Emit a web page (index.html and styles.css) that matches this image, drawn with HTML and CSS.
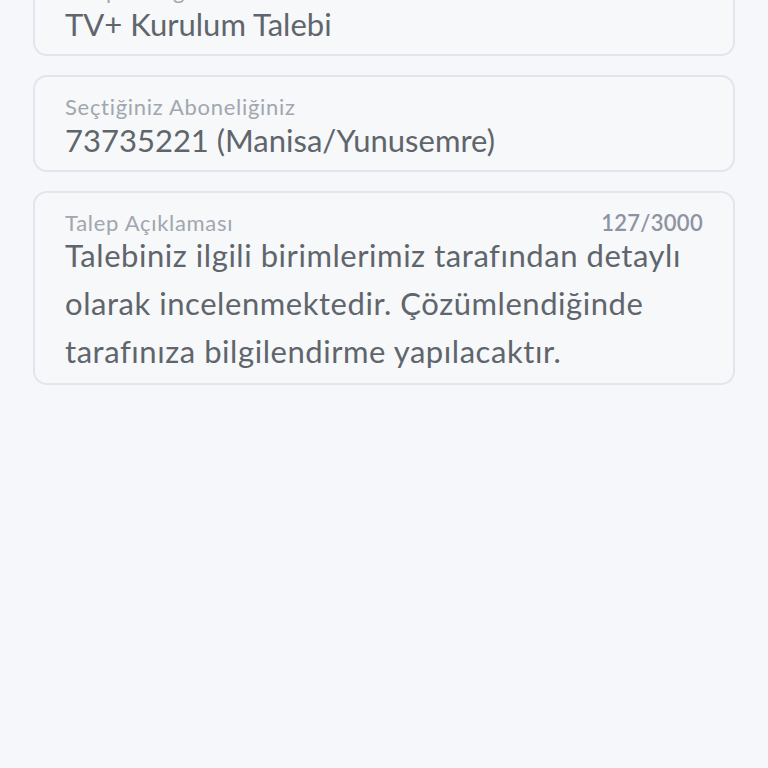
FILE: index.html
```html
<!DOCTYPE html>
<html lang="tr">
<head>
<meta charset="utf-8">
<link rel="stylesheet" href="styles.css">
</head>
<body>
<main class="form">
  <div class="field">
    <div class="label">Talep Kategorisi</div>
    <div class="value">TV+ Kurulum Talebi</div>
  </div>
  <div class="field">
    <div class="label">Seçtiğiniz Aboneliğiniz</div>
    <div class="value">73735221 (Manisa/Yunusemre)</div>
  </div>
  <div class="field area">
    <div class="label-row">
      <span class="label">Talep Açıklaması</span>
      <span class="counter">127/3000</span>
    </div>
    <div class="text">Talebiniz ilgili birimlerimiz tarafından detaylı olarak incelenmektedir. Çözümlendiğinde tarafınıza bilgilendirme yapılacaktır.</div>
  </div>
</main>
</body>
</html>
```
FILE: styles.css
```css
html, body {
  margin: 0;
  padding: 0;
  background: #f5f7fa;
  height: 100%;
  overflow: hidden;
}
body {
  font-family: Lato, "Noto Sans", sans-serif;
}
.form {
  display: flex;
  flex-direction: column;
  gap: 19px;
  margin: -41px 33px 0 33px;
}
.field {
  border: 2px solid #e2e5eb;
  border-radius: 14px;
  background: #f6f8fa;
  padding: 18px 30px 0 30px;
  height: 97px;
  box-sizing: border-box;
}
.label {
  font-size: 22px;
  line-height: 24px;
  letter-spacing: 0.7px;
  color: #a2a6af;
}
.value {
  font-size: 31px;
  line-height: 42px;
  color: #60656c;
}
.field.area {
  height: 194px;
}
.label-row {
  display: flex;
  justify-content: space-between;
  align-items: baseline;
}
.counter {
  font-size: 22px;
  line-height: 24px;
  letter-spacing: 0.3px;
  color: #8e93a2;
  font-weight: 600;
}
.text {
  font-size: 31px;
  line-height: 48px;
  letter-spacing: 0.55px;
  color: #60656c;
  margin-top: -4px;
}
```
